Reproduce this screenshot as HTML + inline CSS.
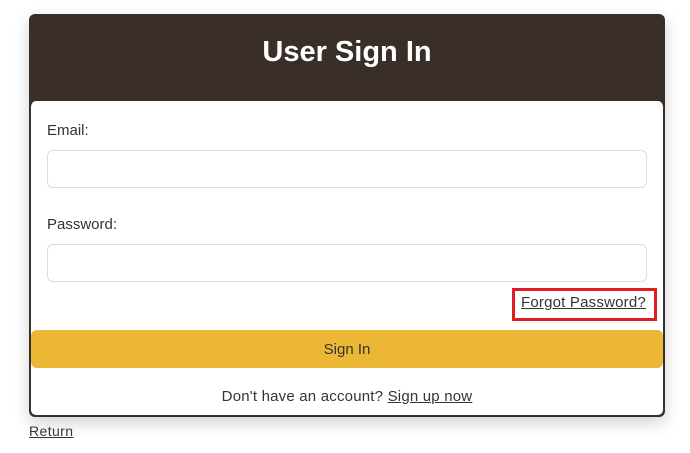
<!DOCTYPE html>
<html><head><style>
body{margin:0;background:#fff;font-family:"Liberation Sans",sans-serif;width:690px;height:453px;position:relative;overflow:hidden;color:#222}
.card{position:absolute;left:29px;top:14px;width:636px;height:403px;background:#3a2e29;border-radius:6px;box-shadow:0 6px 16px rgba(0,0,0,.18)}
.head{position:absolute;left:0;top:0;width:636px;height:87px;color:#fff;font-weight:bold;font-size:29px;text-align:center;line-height:76px}
.body{position:absolute;left:1px;top:87px;width:632px;height:314px;background:#fff;border:1px solid #333;border-top:none;border-radius:6px 6px 6px 6px}
.lbl{position:absolute;left:47px;font-size:15px;color:#333}
.inp{position:absolute;left:47px;width:598px;height:36px;border:1px solid #ddd;border-radius:6px;background:#fff}
a{color:#333;text-decoration:underline}
</style></head><body>
<div class="card"><div class="head">User Sign In</div><div class="body"></div></div>
<div class="lbl" style="top:122px">Email:</div>
<div class="inp" style="top:150px"></div>
<div class="lbl" style="top:216px">Password:</div>
<div class="inp" style="top:244px"></div>
<div style="position:absolute;left:512px;top:288px;width:139px;height:27px;border:3px solid #e21b23"></div>
<a style="position:absolute;left:521px;top:294px;font-size:15px;letter-spacing:0.2px">Forgot Password?</a>
<div style="position:absolute;left:31px;top:330px;width:632px;height:38px;background:#ebb734;border-radius:6px;text-align:center;line-height:40px;font-size:15px;color:#333">Sign In</div>
<div style="position:absolute;left:0;width:694px;top:388px;text-align:center;font-size:15px;color:#333;letter-spacing:0.2px">Don't have an account? <a>Sign up now</a></div>
<a style="position:absolute;left:29px;top:423px;font-size:14px;letter-spacing:0.4px">Return</a>
</body></html>
